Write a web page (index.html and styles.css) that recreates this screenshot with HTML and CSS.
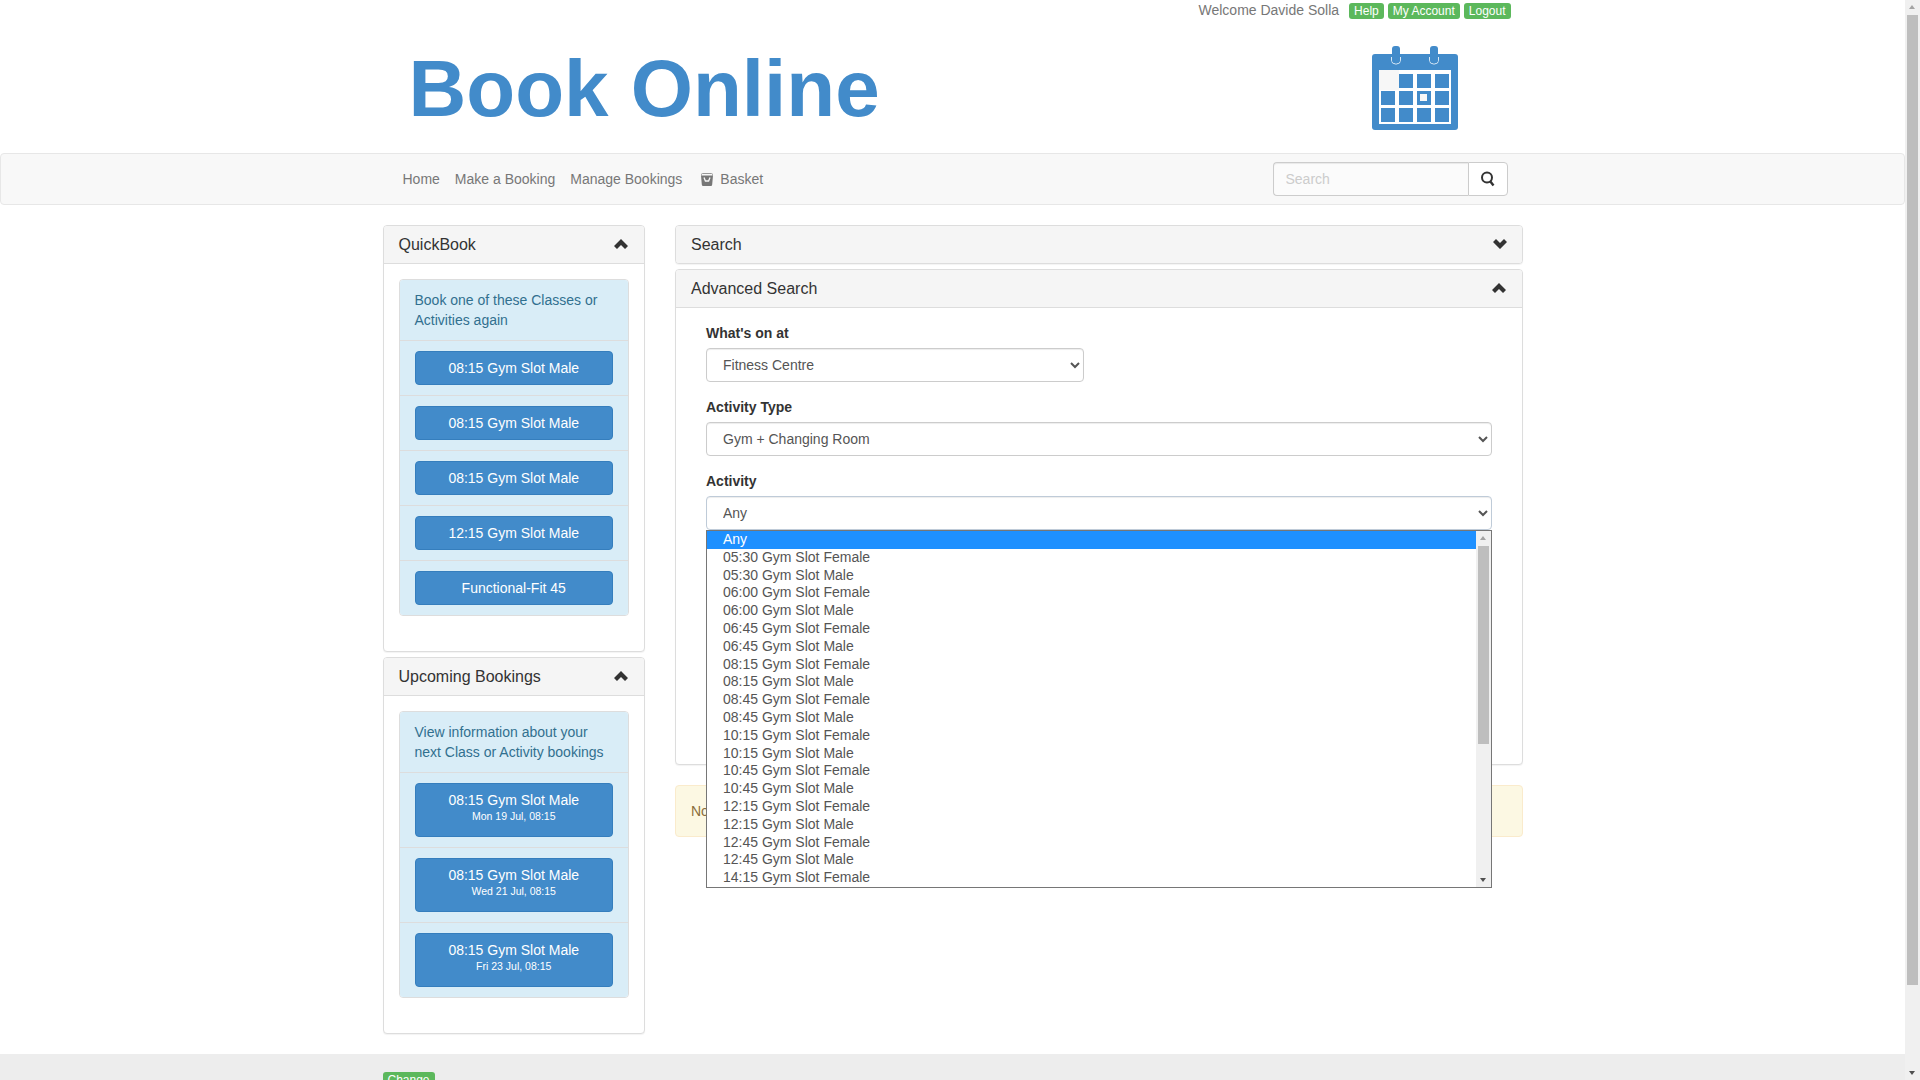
FILE: index.html
```html
<!DOCTYPE html>
<html lang="en">
<head>
  <meta charset="UTF-8" />
  <title>Book Online</title>
  <link rel="stylesheet" href="styles.css">
</head>
<body>
  <div class="app">
    <div class="page">
      <div class="container top-links">
        <span class="welcome">Welcome Davide Solla</span>
        <a class="tag">Help</a>
        <a class="tag">My Account</a>
        <a class="tag">Logout</a>
      </div>

      <div class="container masthead">
        <div class="logo">Book Online</div>
        <svg class="calendar" width="86" height="84" viewBox="0 0 86 84">
          <path fill="#428bca" d="M3 8h80a3 3 0 0 1 3 3v70a3 3 0 0 1-3 3H3a3 3 0 0 1-3-3V11a3 3 0 0 1 3-3z"/>
          <path fill="none" stroke="#fff" stroke-width="0.8" d="M19.5 11v3a4 4 0 0 0 4 4h1a4 4 0 0 0 4-4v-3M57.5 11v3a4 4 0 0 0 4 4h1a4 4 0 0 0 4-4v-3"/>
          <rect x="20" y="0" width="8" height="17" rx="3" fill="#428bca"/>
          <rect x="58" y="0" width="8" height="17" rx="3" fill="#428bca"/>
          <rect x="7" y="24" width="72" height="54" fill="#fff"/>
          <rect x="7" y="24" width="20" height="20" fill="#f7f7f7"/>
          <rect x="27" y="28" width="14" height="14" fill="#428bca"/>
          <rect x="45" y="28" width="14" height="14" fill="#428bca"/>
          <rect x="63" y="28" width="14" height="14" fill="#428bca"/>
          <rect x="9" y="45" width="14" height="14" fill="#428bca"/>
          <rect x="27" y="45" width="14" height="14" fill="#428bca"/>
          <rect x="45" y="45" width="14" height="14" fill="#428bca"/>
          <rect x="48" y="48" width="7" height="7" fill="#f7f7f7"/>
          <rect x="63" y="45" width="14" height="14" fill="#428bca"/>
          <rect x="9" y="62" width="14" height="14" fill="#428bca"/>
          <rect x="27" y="62" width="14" height="14" fill="#428bca"/>
          <rect x="45" y="62" width="14" height="14" fill="#428bca"/>
          <rect x="63" y="62" width="14" height="14" fill="#428bca"/>
        </svg>
      </div>

      <nav class="navbar">
        <div class="container navbar-inner">
          <ul class="nav">
            <li><a>Home</a></li>
            <li><a>Make a Booking</a></li>
            <li><a>Manage Bookings</a></li>
            <li>
              <a class="basket">
                <svg width="14" height="13" viewBox="0 0 14 13">
                  <path fill="none" stroke="#999" stroke-width="1" d="M1.5 2.5 V1.5 a1 1 0 0 1 1-1 h9 a1 1 0 0 1 1 1 V2.5"/>
                  <path fill="#777" d="M1 2.5h12l-.8 9a1.5 1.5 0 0 1-1.5 1.5H3.3a1.5 1.5 0 0 1-1.5-1.5z"/>
                  <path fill="none" stroke="#f8f8f8" stroke-width="1.3" d="M4 4.5 L5.4 8 H8.6 L10 4.5"/>
                </svg>
                Basket
              </a>
            </li>
          </ul>
          <div class="search-group">
            <input class="search-input" type="text" placeholder="Search" />
            <button class="search-btn" type="button">
              <svg width="16" height="16" viewBox="0 0 16 16">
                <circle cx="7" cy="6.5" r="5" fill="none" stroke="#333" stroke-width="2"/>
                <path d="M10 10l3.5 4.5" stroke="#333" stroke-width="2.4" fill="none"/>
              </svg>
            </button>
          </div>
        </div>
      </nav>

      <div class="container columns">
        <aside class="side-col">
          <section class="panel">
            <div class="panel-heading">
              <span>QuickBook</span>
              <svg class="chev chev-side" width="14" height="10" viewBox="0 0 14 10"><path d="M7 0l7 7-3 3-4-4-4 4-3-3z"/></svg>
            </div>
            <div class="panel-body">
              <div class="list">
                <div class="list-item">Book one of these Classes or Activities again</div>
                <div class="list-item"><a class="btn">08:15 Gym Slot Male</a></div>
                <div class="list-item"><a class="btn">08:15 Gym Slot Male</a></div>
                <div class="list-item"><a class="btn">08:15 Gym Slot Male</a></div>
                <div class="list-item"><a class="btn">12:15 Gym Slot Male</a></div>
                <div class="list-item"><a class="btn">Functional-Fit 45</a></div>
              </div>
            </div>
          </section>

          <section class="panel">
            <div class="panel-heading">
              <span>Upcoming Bookings</span>
              <svg class="chev chev-side" width="14" height="10" viewBox="0 0 14 10"><path d="M7 0l7 7-3 3-4-4-4 4-3-3z"/></svg>
            </div>
            <div class="panel-body">
              <div class="list">
                <div class="list-item">View information about your next Class or Activity bookings</div>
                <div class="list-item"><a class="btn">08:15 Gym Slot Male<small>Mon 19 Jul, 08:15</small></a></div>
                <div class="list-item"><a class="btn">08:15 Gym Slot Male<small>Wed 21 Jul, 08:15</small></a></div>
                <div class="list-item"><a class="btn">08:15 Gym Slot Male<small>Fri 23 Jul, 08:15</small></a></div>
              </div>
            </div>
          </section>
        </aside>

        <main class="main-col">
          <section class="panel panel-closed">
            <div class="panel-heading">
              <span>Search</span>
              <svg class="chev" width="14" height="10" viewBox="0 0 14 10"><path d="M7 10l7-7-3-3-4 4-4-4-3 3z"/></svg>
            </div>
          </section>

          <section class="panel panel-search">
            <div class="panel-heading">
              <span>Advanced Search</span>
              <svg class="chev chev-side" width="14" height="10" viewBox="0 0 14 10"><path d="M7 0l7 7-3 3-4-4-4 4-3-3z"/></svg>
            </div>
            <div class="panel-body search-body">
              <div class="form-group">
                <label>What's on at</label>
                <select class="form-control venue-select">
                  <option>Fitness Centre</option>
                </select>
              </div>
              <div class="form-group">
                <label>Activity Type</label>
                <select class="form-control">
                  <option>Gym + Changing Room</option>
                </select>
              </div>
              <div class="form-group activity-group">
                <label>Activity</label>
                <select class="form-control focused">
                  <option>Any</option>
                </select>
                <div class="dropdown">
                  <div class="options" id="options"></div>
                  <div class="drop-scroll">
                    <span class="arrow-up"></span>
                    <span class="drop-thumb"></span>
                    <span class="arrow-down"></span>
                  </div>
                </div>
              </div>
            </div>
          </section>

          <div class="alert">No classes or activities found</div>
        </main>
      </div>

      <footer class="footer">
        <div class="container">
          <a class="tag tag-fit">Change</a>
        </div>
      </footer>
    </div>

    <div class="page-scroll">
      <span class="arrow-up"></span>
      <span class="page-thumb"></span>
      <span class="arrow-down"></span>
    </div>
  </div>

  <script>
    var names = [
      "Any",
      "05:30 Gym Slot Female", "05:30 Gym Slot Male",
      "06:00 Gym Slot Female", "06:00 Gym Slot Male",
      "06:45 Gym Slot Female", "06:45 Gym Slot Male",
      "08:15 Gym Slot Female", "08:15 Gym Slot Male",
      "08:45 Gym Slot Female", "08:45 Gym Slot Male",
      "10:15 Gym Slot Female", "10:15 Gym Slot Male",
      "10:45 Gym Slot Female", "10:45 Gym Slot Male",
      "12:15 Gym Slot Female", "12:15 Gym Slot Male",
      "12:45 Gym Slot Female", "12:45 Gym Slot Male",
      "14:15 Gym Slot Female"
    ];
    var box = document.getElementById("options");
    names.forEach(function (name, i) {
      var row = document.createElement("div");
      row.className = i === 0 ? "option selected" : "option";
      row.textContent = name;
      box.appendChild(row);
    });
  </script>
</body>
</html>
```

FILE: styles.css
```css
* {
  box-sizing: border-box;
}
html, body {
  margin: 0;
  height: 100%;
  overflow: hidden;
}
body {
  font-family: "Liberation Sans", Arial, sans-serif;
  font-size: 14px;
  line-height: 20px;
  color: #333;
  background: #fff;
}
.app {
  display: flex;
  height: 1080px;
}
.page {
  flex: 1;
  min-width: 0;
  overflow: hidden;
}
.container {
  width: 1170px;
  margin: 0 auto;
  padding: 0 15px;
}

/* top row */
.top-links {
  display: flex;
  justify-content: flex-end;
  align-items: flex-start;
  gap: 4px;
  height: 21px;
  padding-top: 3px;
  padding-right: 27px;
  color: #777;
}
.welcome {
  margin-right: 6px;
  line-height: 14px;
}
.tag {
  display: block;
  height: 16px;
  padding: 0 5px;
  font-size: 12px;
  line-height: 16px;
  color: #fff;
  background: #5cb85c;
  border-radius: 3px;
}
.tag-fit {
  width: fit-content;
}

/* logo row */
.masthead {
  display: flex;
  justify-content: space-between;
  align-items: flex-start;
  height: 132px;
  padding-left: 41px;
  padding-right: 80px;
}
.logo {
  margin-top: 22px;
  font-size: 80px;
  line-height: 92px;
  font-weight: bold;
  color: #428bca;
}
.calendar {
  margin-top: 25px;
}

/* navbar */
.navbar {
  height: 52px;
  margin-bottom: 20px;
  background: #f8f8f8;
  border: 1px solid #e7e7e7;
  border-radius: 4px;
}
.navbar-inner {
  display: flex;
  justify-content: space-between;
  align-items: center;
  height: 50px;
  padding-left: 27.5px;
  padding-right: 30px;
}
.nav {
  display: flex;
  margin: 0;
  padding: 0;
  list-style: none;
}
.nav a {
  display: flex;
  align-items: center;
  padding: 0 7.5px;
  color: #777;
}
.basket svg {
  margin: 0 6px 0 3px;
}
.search-group {
  display: flex;
}
.search-input {
  width: 195px;
  height: 34px;
  padding: 6px 12px;
  font: inherit;
  color: #555;
  background: #fbfbfb;
  border: 1px solid #ccc;
  border-right: 0;
  border-radius: 4px 0 0 4px;
  box-shadow: inset 0 1px 1px rgba(0,0,0,0.075);
}
.search-input::placeholder {
  color: #ccc;
}
.search-btn {
  display: flex;
  align-items: center;
  justify-content: center;
  width: 40px;
  height: 34px;
  padding: 0;
  background: #fff;
  border: 1px solid #ccc;
  border-radius: 0 4px 4px 0;
}

/* columns */
.columns {
  display: flex;
  gap: 30px;
  align-items: flex-start;
}
.side-col {
  width: 262.5px;
  flex: none;
}
.main-col {
  flex: 1;
  min-width: 0;
}
.panel {
  margin-bottom: 5px;
  background: #fff;
  border: 1px solid #ddd;
  border-radius: 4px;
  box-shadow: 0 1px 1px rgba(0,0,0,0.05);
}
.panel-heading {
  display: flex;
  justify-content: space-between;
  align-items: center;
  height: 37px;
  padding: 0 15px;
  font-size: 16px;
  color: #333;
  background: #f5f5f5;
  border-radius: 3px 3px 0 0;
}
.panel-closed .panel-heading {
  border-radius: 3px;
}
.chev {
  fill: #333;
  margin-top: -2px;
}
.chev-side {
  margin-right: 1px;
}
.panel-body {
  padding: 15px;
  border-top: 1px solid #ddd;
}
.list {
  margin-bottom: 20px;
  border: 1px solid #ddd;
  border-radius: 4px;
  overflow: hidden;
}
.list-item {
  padding: 10px 15px;
  color: #31708f;
  background: #d9edf7;
  border-top: 1px solid #ddd;
}
.list-item:first-child {
  border-top: 0;
}
.btn {
  display: block;
  padding: 6px 12px;
  text-align: center;
  color: #fff;
  background: #428bca;
  border: 1px solid #357ebd;
  border-radius: 4px;
}
.btn small {
  display: block;
  padding-bottom: 8px;
  font-size: 10.5px;
  line-height: 12px;
}

/* advanced search form */
.search-body {
  height: 457px;
  padding: 15px 30px;
}
.form-group {
  margin-bottom: 15px;
}
.activity-group {
  position: relative;
}
label {
  display: block;
  margin-bottom: 5px;
  font-weight: bold;
}
.form-control {
  display: block;
  width: 100%;
  height: 34px;
  padding: 6px 12px;
  font: inherit;
  color: #555;
  background: #fff;
  border: 1px solid #ccc;
  border-radius: 4px;
  box-shadow: inset 0 1px 1px rgba(0,0,0,0.075);
}
.venue-select {
  width: 378px;
}
.focused {
  border-color: #bfcbd8;
}
.panel-search {
  margin-bottom: 20px;
}

/* open dropdown of the Activity select */
.dropdown {
  position: absolute;
  left: 0;
  right: 0;
  top: 59px;
  height: 358px;
  display: flex;
  background: #fff;
  border: 1px solid #767676;
  z-index: 10;
}
.options {
  flex: 1;
  overflow: hidden;
}
.option {
  height: 17.8px;
  padding-left: 16px;
  line-height: 17.8px;
  color: #555;
}
.option.selected {
  color: #fff;
  background: #1e90ff;
}
.drop-scroll, .page-scroll {
  position: relative;
  flex: none;
  width: 15px;
  background: #f0f0f0;
}
.drop-thumb, .page-thumb {
  position: absolute;
  left: 2px;
  width: 11px;
  background: #bebebe;
}
.drop-thumb {
  top: 15px;
  height: 198px;
}
.page-thumb {
  top: 15px;
  height: 970px;
}
.arrow-up, .arrow-down {
  position: absolute;
  left: 4px;
  width: 0;
  height: 0;
  border-left: 3.5px solid transparent;
  border-right: 3.5px solid transparent;
}
.arrow-up {
  top: 5px;
  border-bottom: 4px solid #a3a3a3;
}
.arrow-down {
  bottom: 5px;
  border-top: 4px solid #505050;
}

.alert {
  height: 52px;
  padding: 15px;
  color: #8a6d3b;
  background: #fcf8e3;
  border: 1px solid #faebcc;
  border-radius: 4px;
}

.footer {
  margin-top: 15px;
  height: 60px;
  padding-top: 18px;
  background: #ededed;
}
```
